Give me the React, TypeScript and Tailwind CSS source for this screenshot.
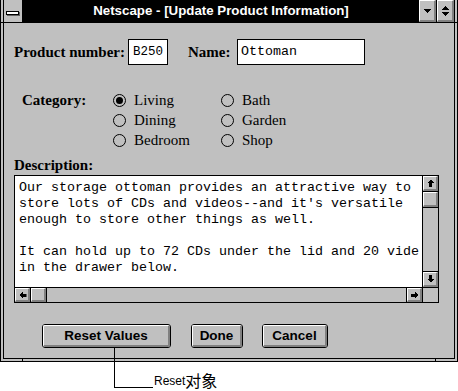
import React from "react";

function Arrow({ dir }: { dir: "up" | "down" | "left" | "right" }) {
  const rot =
    dir === "up" ? "" : dir === "down" ? "rotate-180" : dir === "left" ? "-rotate-90" : "rotate-90";
  return (
    <svg width="7" height="8" viewBox="0 0 7 8" className={rot} shapeRendering="crispEdges">
      <polygon points="3.5,0.5 7,4 5,4 5,8 2,8 2,4 0,4" fill="#000" />
    </svg>
  );
}

function Bevel({ children, className }: { children?: React.ReactNode; className?: string }) {
  return (
    <div
      className={
        "bg-[#c0c0c0] border-t border-l border-t-white border-l-white border-r-2 border-b-2 border-r-[#808080] border-b-[#808080] flex items-center justify-center " +
        (className ?? "")
      }
    >
      {children}
    </div>
  );
}

function Radio({ checked, label }: { checked?: boolean; label: string }) {
  return (
    <div className="flex items-center h-[20px]">
      <span className="w-[13px] h-[13px] rounded-full border border-black flex items-center justify-center">
        {checked && <span className="w-[7px] h-[7px] rounded-full bg-black" />}
      </span>
      <span className="ml-[8px] text-[15px] leading-[20px]">{label}</span>
    </div>
  );
}

function Btn({ label, className }: { label: string; className: string }) {
  return (
    <div className={"h-[24px] rounded-[3px] border border-black bg-[#c0c0c0] " + className}>
      <div className="h-full border-t border-l border-t-white border-l-white border-r-2 border-b-2 border-r-[#808080] border-b-[#808080] rounded-[2px] flex items-center justify-center font-['Liberation_Sans',sans-serif] font-bold text-[13.5px] leading-none">
        {label}
      </div>
    </div>
  );
}

const lines = [
  "Our storage ottoman provides an attractive way to",
  "store lots of CDs and videos--and it's versatile",
  "enough to store other things as well.",
  "",
  "It can hold up to 72 CDs under the lid and 20 vide",
  "in the drawer below.",
];

export default function App() {
  return (
    <div className="relative w-[458px] h-[391px] bg-white overflow-hidden text-black">
      <div className="w-[458px] h-[362px] border-x border-b border-black bg-[#c0c0c0] px-[2px] pb-[2px]">
        <div className="h-full border-x border-b border-black flex flex-col">
          {/* Title bar */}
          <div className="h-[23px] border-b border-black flex">
            <div className="w-[19px] border-r border-black bg-[#c0c0c0] flex items-start pl-[2px] pt-[11px]">
              <div className="w-[13px] h-[4px] border border-black bg-white shadow-[1px_1px_0_0_#606060]" />
            </div>
            <div className="flex-1 bg-black text-white flex items-center justify-center font-['Liberation_Sans',sans-serif] font-bold text-[13.3px] leading-none pb-[1px]">
              Netscape - [Update Product Information]
            </div>
            <Bevel className="w-[17px]">
              <svg width="7" height="4" viewBox="0 0 7 4" shapeRendering="crispEdges">
                <polygon points="0,0 7,0 3.5,4" fill="#000" />
              </svg>
            </Bevel>
            <div className="w-[18px] border-l border-black flex">
              <Bevel className="flex-1 flex-col gap-[2px]">
                <svg width="7" height="4" viewBox="0 0 7 4" shapeRendering="crispEdges">
                  <polygon points="3.5,0 7,4 0,4" fill="#000" />
                </svg>
                <svg width="7" height="4" viewBox="0 0 7 4" shapeRendering="crispEdges">
                  <polygon points="0,0 7,0 3.5,4" fill="#000" />
                </svg>
              </Bevel>
            </div>
          </div>

          {/* Body */}
          <div className="flex-1 pl-[10px] pt-[16px] flex flex-col font-['Liberation_Serif',serif]">
            <div className="flex items-center h-[26px]">
              <div className="w-[114px] font-bold text-[15px]">Product number:</div>
              <div className="w-[40px] h-[26px] border border-black bg-white pl-[4px] flex items-center font-['Liberation_Mono',monospace] text-[12.5px]">
                B250
              </div>
              <div className="ml-[20px] w-[49px] font-bold text-[15px]">Name:</div>
              <div className="w-[128px] h-[26px] border border-black bg-white pl-[3px] flex items-center font-['Liberation_Mono',monospace] text-[13.33px]">
                Ottoman
              </div>
            </div>

            <div className="mt-[25px] flex">
              <div className="w-[99px] pl-[8px] font-bold text-[15px] leading-[20px]">Category:</div>
              <div className="grid grid-cols-[108px_auto]">
                <Radio checked label="Living" />
                <Radio label="Bath" />
                <Radio label="Dining" />
                <Radio label="Garden" />
                <Radio label="Bedroom" />
                <Radio label="Shop" />
              </div>
            </div>

            <div className="mt-[5px] font-bold text-[15px] leading-[20px]">Description:</div>

            <div className="w-[425px] h-[128px] border border-black bg-white grid grid-cols-[1fr_16px] grid-rows-[1fr_15px]">
              <div className="overflow-hidden pl-[4px] pt-[4px] font-['Liberation_Mono',monospace] text-[13.33px] leading-[16px]">
                {lines.map((l, i) => (
                  <div key={i} className="whitespace-pre h-[16px]">
                    {l}
                  </div>
                ))}
              </div>
              <div className="border-l border-black bg-[#c0c0c0] flex flex-col">
                <div className="h-[16px] border-b border-black flex">
                  <Bevel className="flex-1">
                    <Arrow dir="up" />
                  </Bevel>
                </div>
                <div className="h-[16px] border-b border-black flex">
                  <Bevel className="flex-1" />
                </div>
                <div className="flex-1" />
                <div className="h-[16px] border-t border-black flex">
                  <Bevel className="flex-1">
                    <Arrow dir="down" />
                  </Bevel>
                </div>
              </div>
              <div className="border-t border-black bg-[#c0c0c0] flex">
                <div className="w-[16px] border-r border-black flex">
                  <Bevel className="flex-1">
                    <Arrow dir="left" />
                  </Bevel>
                </div>
                <div className="w-[16px] border-r border-black flex">
                  <Bevel className="flex-1" />
                </div>
                <div className="flex-1" />
                <div className="w-[16px] border-l border-black flex">
                  <Bevel className="flex-1">
                    <Arrow dir="right" />
                  </Bevel>
                </div>
              </div>
              <div className="border-l border-t border-black bg-[#c0c0c0]" />
            </div>

            <div className="mt-[21px] flex pl-[28px]">
              <Btn label="Reset Values" className="w-[129px]" />
              <Btn label="Done" className="ml-[20px] w-[52px]" />
              <Btn label="Cancel" className="ml-[19px] w-[66px]" />
            </div>
          </div>
        </div>
      </div>

      {/* frame resize ticks */}
      <div className="absolute left-[22px] top-[358px] w-px h-[4px] bg-black" />
      <div className="absolute left-[435px] top-[358px] w-px h-[4px] bg-black" />
      <div className="absolute left-0 top-[22px] w-[4px] h-px bg-black" />
      <div className="absolute left-[454px] top-[22px] w-[4px] h-px bg-black" />

      {/* callout */}
      <div className="absolute left-[114px] top-[348px] w-[39px] h-[40px] border-l border-b border-black" />
      <div className="absolute left-[154px] top-[372px] flex items-end leading-none">
        <span className="font-['Liberation_Sans',sans-serif] text-[12px] pb-[1px]">Reset</span>
        <span className="font-['Noto_Sans_CJK_SC',sans-serif] text-[16px]">对象</span>
      </div>
    </div>
  );
}
